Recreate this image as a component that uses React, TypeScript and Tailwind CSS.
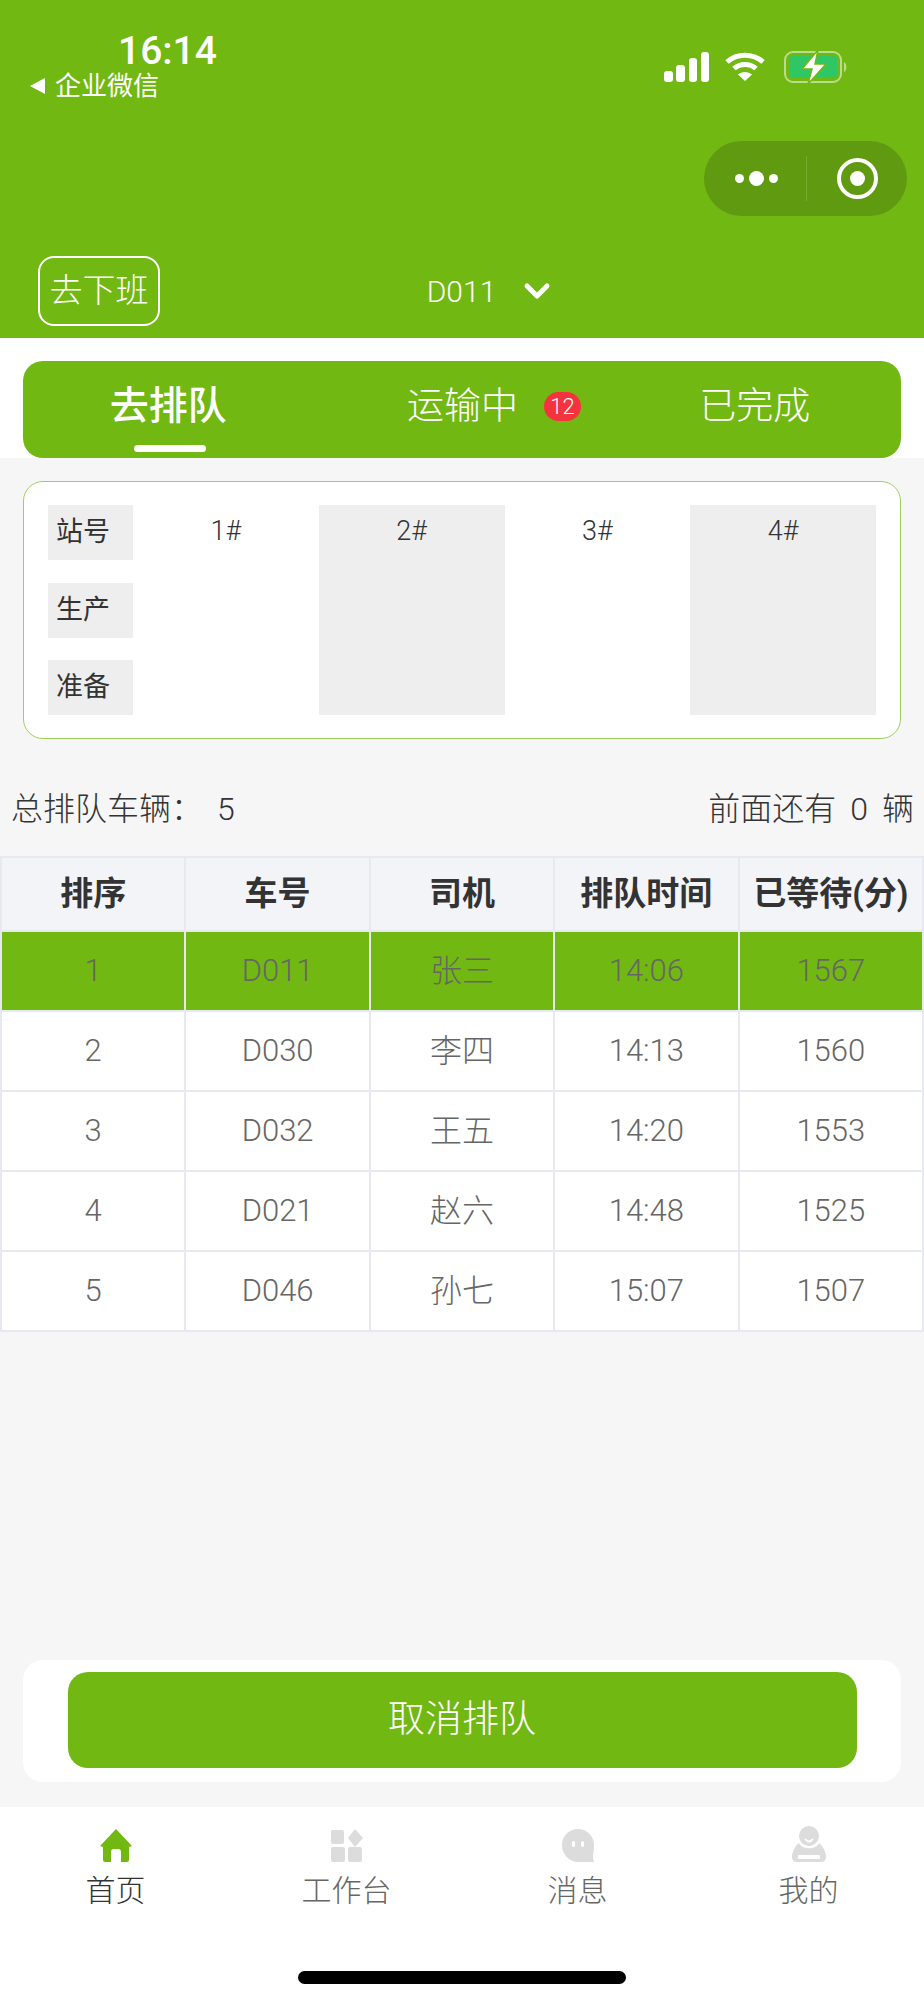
import { ChevronDown } from "lucide-react";

const FONT = "font-['Roboto','Noto_Sans_CJK_SC',sans-serif]";

const queue = [
  { no: "1", car: "D011", driver: "张三", time: "14:06", wait: "1567" },
  { no: "2", car: "D030", driver: "李四", time: "14:13", wait: "1560" },
  { no: "3", car: "D032", driver: "王五", time: "14:20", wait: "1553" },
  { no: "4", car: "D021", driver: "赵六", time: "14:48", wait: "1525" },
  { no: "5", car: "D046", driver: "孙七", time: "15:07", wait: "1507" },
];

const headers = ["排序", "车号", "司机", "排队时间", "已等待(分)"];

function StatusIcons() {
  return (
    <div className="flex items-center">
      <svg width="46" height="30" viewBox="0 0 46 30" fill="#fff">
        <rect x="0" y="19" width="9" height="11" rx="3" />
        <rect x="12" y="13" width="9" height="17" rx="3" />
        <rect x="25" y="6" width="8" height="24" rx="3" />
        <rect x="37" y="0" width="8" height="30" rx="3" />
      </svg>
      <svg className="ml-[15px]" width="40" height="30" viewBox="0 0 40 30" fill="none" stroke="#fff" strokeWidth="5">
        <path d="M2 10 C12 1 28 1 38 10" />
        <path d="M9 16.5 C15 11 25 11 31 16.5" />
        <path d="M20 29 L13 22.5 C17 19 23 19 27 22.5 Z" fill="#fff" stroke="none" />
      </svg>
      <svg className="ml-[19px]" width="64" height="34" viewBox="0 0 64 34" fill="none">
        <rect x="1" y="2" width="56" height="30" rx="8" stroke="#b9dd8c" strokeWidth="2" />
        <rect x="5" y="6" width="48" height="22" rx="4" fill="#2fc766" />
        <path d="M60 12 C63 13 63 21 60 22 Z" fill="#b9dd8c" />
        <path d="M34 0 L18 19 L28 19 L24 34 L42 14 L31 14 Z" fill="#fff" stroke="#72b813" strokeWidth="1.5" />
      </svg>
    </div>
  );
}

function Capsule() {
  return (
    <div className="flex h-[75px] w-[203px] items-center rounded-full bg-[#5f9a10]">
      <div className="flex w-[102px] items-center justify-center gap-[5px] pl-[2px]">
        <span className="h-[9px] w-[9px] rounded-full bg-white" />
        <span className="h-[15px] w-[15px] rounded-full bg-white" />
        <span className="h-[9px] w-[9px] rounded-full bg-white" />
      </div>
      <div className="h-[45px] w-px bg-[#77ad2c]" />
      <div className="flex flex-1 items-center justify-center">
        <div className="flex h-[41px] w-[41px] items-center justify-center rounded-full border-[4px] border-white">
          <span className="h-[15px] w-[15px] rounded-full bg-white" />
        </div>
      </div>
    </div>
  );
}

function HomeIcon() {
  return (
    <svg width="34" height="34" viewBox="0 0 34 34" fill="#72b813">
      <path d="M17 1 L33 18 L30 19 L30 32 Q30 34 28 34 L22 34 L22 24 Q22 21 19 21 L15 21 Q12 21 12 24 L12 34 L6 34 Q4 34 4 32 L4 19 L1 18 Z" />
    </svg>
  );
}

function WorkIcon() {
  return (
    <svg width="34" height="34" viewBox="0 0 34 34" fill="#dcdcdc">
      <rect x="1" y="2" width="13" height="14" rx="2" />
      <path d="M25 1 L33 10 L25 19 L18 10 Z" />
      <rect x="1" y="19" width="14" height="15" rx="2" />
      <rect x="18" y="19" width="14" height="15" rx="2" />
    </svg>
  );
}

function MessageIcon() {
  return (
    <svg width="34" height="34" viewBox="0 0 34 34" fill="#dcdcdc">
      <path d="M17 1 C26 1 33 8 33 17 C33 22 32 26 32 30 L33 34 L17 34 C8 34 1 26 1 17 C1 8 8 1 17 1 Z" />
      <rect x="11" y="13" width="3" height="6" rx="1.5" fill="#fff" />
      <rect x="20" y="13" width="3" height="6" rx="1.5" fill="#fff" />
    </svg>
  );
}

function UserIcon() {
  return (
    <svg width="34" height="36" viewBox="0 0 34 36" fill="#dcdcdc">
      <ellipse cx="17" cy="10" rx="10" ry="10" />
      <path d="M7 17 C10 24 24 24 27 17 C31 20 34 26 34 31 C34 34 32 36 29 36 L5 36 C2 36 0 34 0 31 C0 26 3 20 7 17 Z" />
      <rect x="6" y="29" width="22" height="4" rx="1" fill="#fff" />
      <path d="M13 13 Q17 18 21 13" fill="none" stroke="#fff" strokeWidth="2" />
    </svg>
  );
}

const tabs = [
  { label: "首页", icon: <HomeIcon />, active: true },
  { label: "工作台", icon: <WorkIcon />, active: false },
  { label: "消息", icon: <MessageIcon />, active: false },
  { label: "我的", icon: <UserIcon />, active: false },
];

export default function App() {
  return (
    <div className={`${FONT} flex h-[2000px] w-[924px] flex-col bg-[#f6f6f6]`}>
      {/* header */}
      <div className="flex h-[338px] shrink-0 flex-col bg-[#72b813] text-white">
        <div className="flex h-[105px] items-start justify-between pl-[30px] pr-[76px] pt-[31px]">
          <div className="flex flex-col">
            <span className="ml-[88px] text-[39px] font-medium leading-[41px]">16:14</span>
            <div className="flex items-center gap-[10px] leading-[28px]">
              <span className="h-0 w-0 border-y-[8px] border-r-[15px] border-y-transparent border-r-white" />
              <span className="text-[26px]">企业微信</span>
            </div>
          </div>
          <div className="mt-[19px]">
            <StatusIcons />
          </div>
        </div>
        <div className="mr-[17px] mt-[36px] flex justify-end">
          <Capsule />
        </div>
        <div className="relative mt-[40px] flex items-center justify-center">
          <div className="absolute left-[38px] top-0 flex h-[70px] w-[122px] items-center justify-center rounded-[16px] border-2 border-white text-[33px] font-light">
            去下班
          </div>
          <div className="mt-[15px] flex h-[40px] items-center gap-[21px] pl-[60px] text-[30px] font-light">
            <span>D011</span>
            <ChevronDown className="h-[40px] w-[40px]" strokeWidth={3} />
          </div>
        </div>
      </div>

      {/* tabs */}
      <div className="h-[120px] shrink-0 bg-white px-[23px] pt-[23px]">
        <div className="grid h-[97px] grid-cols-3 rounded-[20px] bg-[#72b813] text-white">
          <div className="relative flex items-center justify-center pb-[6px] text-[39px] font-medium">
            <span className="mr-[2px]">去排队</span>
            <span className="absolute bottom-[6px] left-[111px] h-[7px] w-[72px] rounded-full bg-white" />
          </div>
          <div className="flex items-center justify-center gap-[26px] pb-[6px] pl-[64px] text-[37px] font-light">
            <span>运输中</span>
            <span className="flex h-[29px] w-[37px] items-center justify-center rounded-full bg-[#f5333f] text-[22px]">12</span>
          </div>
          <div className="flex items-center justify-center pb-[6px] text-[37px] font-light">已完成</div>
        </div>
      </div>

      {/* station card */}
      <div className="mx-[23px] mt-[23px] flex h-[258px] shrink-0 rounded-[20px] border border-[#9fd05e] bg-white px-[24px] py-[23px] text-[27px] text-[#333]">
        <div className="flex w-[85px] shrink-0 flex-col justify-between">
          {["站号", "生产", "准备"].map((s) => (
            <div key={s} className="flex h-[55px] items-center bg-[#eeeeee] pl-[8px]">{s}</div>
          ))}
        </div>
        <div className="grid flex-1 grid-cols-4 font-light">
          {["1#", "2#", "3#", "4#"].map((s, i) => (
            <div key={s} className={`flex justify-center pt-[6px] ${i % 2 === 1 ? "bg-[#eeeeee]" : ""}`}>{s}</div>
          ))}
        </div>
      </div>

      {/* summary */}
      <div className="mt-[52px] flex h-[36px] shrink-0 items-center justify-between pl-[11px] pr-[10px] text-[32px] font-light text-[#333]">
        <span>总排队车辆：<span className="ml-[14px]">5</span></span>
        <span>前面还有<span className="mx-[14px]">0</span>辆</span>
      </div>

      {/* queue table */}
      <table className="mt-[29px] w-[924px] shrink-0 table-fixed border-collapse">
        <thead>
          <tr className="h-[74px] bg-[#f3f4f8] text-[#333]">
            {headers.map((h) => (
              <th key={h} className="whitespace-nowrap border-2 border-[#e8e9f0] p-0 text-[33px] font-bold">{h}</th>
            ))}
          </tr>
        </thead>
        <tbody>
          {queue.map((q, i) => (
            <tr key={q.no} className={`h-[80px] font-light text-[#666] ${i === 0 ? "bg-[#72b813]" : "bg-white"}`}>
              {[q.no, q.car, q.driver, q.time, q.wait].map((v, j) => (
                <td key={j} className={`border-2 border-[#e8e9f0] p-0 text-center ${j === 2 ? "text-[32px]" : "text-[31px]"}`}>{v}</td>
              ))}
            </tr>
          ))}
        </tbody>
      </table>

      {/* cancel button */}
      <div className="mx-[23px] mt-auto flex h-[122px] shrink-0 items-center justify-center rounded-[20px] bg-white pb-[2px]">
        <div className="flex h-[96px] w-[789px] items-center justify-center rounded-[20px] bg-[#72b813] text-[37px] font-light text-white">
          取消排队
        </div>
      </div>

      {/* tab bar */}
      <div className="mt-[25px] flex h-[193px] shrink-0 flex-col bg-white">
        <div className="grid grid-cols-4 pt-[17px]">
          {tabs.map((t) => (
            <div key={t.label} className="flex flex-col items-center">
              <div className="flex h-[38px] items-end">{t.icon}</div>
              <span className={`mt-[5px] text-[30px] font-light leading-[48px] ${t.active ? "text-[#333]" : "text-[#666]"}`}>{t.label}</span>
            </div>
          ))}
        </div>
        <div className="mx-auto mt-[56px] h-[13px] w-[328px] rounded-full bg-black" />
      </div>
    </div>
  );
}
